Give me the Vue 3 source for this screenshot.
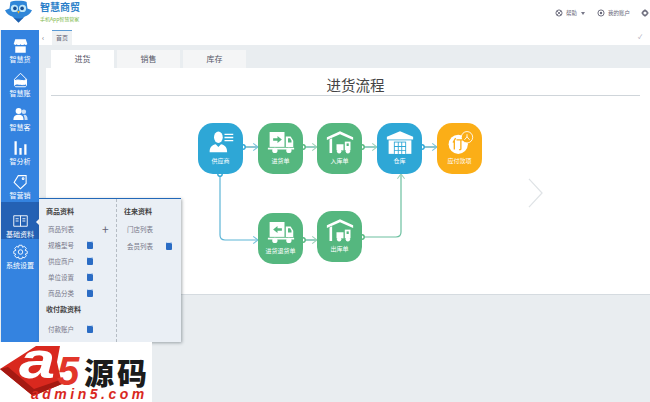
<script setup>
const menus = [
  { name: '智慧货', icon: 'shop' },
  { name: '智慧账', icon: 'wallet' },
  { name: '智慧客', icon: 'users' },
  { name: '智分析', icon: 'bars' },
  { name: '智营销', icon: 'tag' },
  { name: '基础资料', icon: 'book', active: true },
  { name: '系统设置', icon: 'gear' }
]

const tabs = [
  { name: '进货', active: true },
  { name: '销售' },
  { name: '库存' }
]

// 流程节点，坐标相对流程图
const nodes = [
  { name: '供应商', x: 152, y: 55, color: 'blue', icon: 'person' },
  { name: '进货单', x: 212, y: 55, color: 'green', icon: 'truckIn' },
  { name: '入库单', x: 271, y: 55, color: 'green', icon: 'store' },
  { name: '仓库', x: 331, y: 55, color: 'blue', icon: 'house' },
  { name: '应付款项', x: 391, y: 55, color: 'orange', icon: 'pay' },
  { name: '进货退货单', x: 212, y: 145, color: 'green', icon: 'truckOut' },
  { name: '出库单', x: 271, y: 143, color: 'green', icon: 'store' }
]

const leftGroups = [
  {
    title: '商品资料',
    rows: [
      { name: '商品列表', plus: true },
      { name: '规格型号', doc: true },
      { name: '供应商户', doc: true },
      { name: '单位设置', doc: true },
      { name: '商品分类', doc: true }
    ]
  },
  {
    title: '收付款资料',
    rows: [{ name: '付款账户', doc: true }]
  }
]

const rightGroup = {
  title: '往来资料',
  rows: [
    { name: '门店列表' },
    { name: '会员列表', doc: true }
  ]
}
</script>

<template>
  <div class="page">
    <header class="top">
      <div class="brand">
        <svg class="owl" viewBox="0 0 30 26">
          <path d="M6 2C8 0 22 0 24 2L25 9L30 11C28 15 25 17 22 18L18 21L15 24L12 21L8 18C5 17 2 15 0 11L5 9Z" fill="#2f86d8" />
          <path d="M8 18C11 21 19 21 22 18L18 22L15 25L12 22Z" fill="#1c5fae" />
          <circle cx="10.5" cy="9" r="4" fill="#bfe6f8" />
          <circle cx="19.5" cy="9" r="4" fill="#bfe6f8" />
          <circle cx="11" cy="9" r="2" fill="#174f92" />
          <circle cx="19" cy="9" r="2" fill="#174f92" />
          <path d="M13.5 12L16.5 12L15 15Z" fill="#f4b32a" />
        </svg>
        <div class="brand-text">
          <div class="brand-name">智慧商贸</div>
          <div class="brand-sub">手机App智慧管家</div>
        </div>
      </div>
      <div class="tools">
        <svg class="tool-icon" viewBox="0 0 12 12">
          <circle cx="6" cy="6" r="4.6" fill="none" stroke="#667" stroke-width="1.4" />
          <path d="M3 3L9 9M9 3L3 9" stroke="#667" stroke-width="1.2" />
        </svg>
        <span class="tool-text">帮助</span>
        <span class="caret"></span>
        <svg class="tool-icon second" viewBox="0 0 12 12">
          <circle cx="6" cy="6" r="4.6" fill="none" stroke="#667" stroke-width="1.4" />
          <circle cx="6" cy="6" r="1.8" fill="#667" />
        </svg>
        <span class="tool-text">我的账户</span>
        <svg class="tool-icon gear" viewBox="0 0 12 12">
          <circle cx="6" cy="6" r="3.4" fill="none" stroke="#667" stroke-width="2" />
          <path d="M6 0.5V2.5M6 9.5V11.5M0.5 6H2.5M9.5 6H11.5" stroke="#667" stroke-width="1.6" />
        </svg>
      </div>
    </header>

    <div class="body">
      <aside class="side">
        <div v-for="m in menus" :key="m.name" class="menu" :class="{ active: m.active }">
          <svg class="menu-icon" viewBox="0 0 20 20">
            <g v-if="m.icon === 'shop'" fill="#fff">
              <path d="M3 1H17L19 7C19 9 16 9 15 7.500C14 9 11 9 10 7.500C9 9 6 9 5 7.500C4 9 1 9 1 7Z" />
              <path d="M3 10.500H17V19H3Z" />
            </g>
            <g v-else-if="m.icon === 'wallet'" fill="none" stroke="#fff" stroke-width="1.300">
              <path d="M10 1L18 9V17C18 18 17 19 16 19H4C3 19 2 18 2 17V9Z" />
              <path d="M2.500 11C7 8 13 13 17.500 9.500V15C13 18 7 14 2.500 16Z" fill="#fff" />
            </g>
            <g v-else-if="m.icon === 'users'" fill="#fff">
              <circle cx="7.500" cy="6" r="4" />
              <path d="M0.500 18C0.500 12 4 11 7.500 11C11 11 14 12 14 18Z" />
              <circle cx="14.500" cy="7" r="3" opacity=".75" />
              <path d="M15 11C18 11 19.500 13 19.500 18H15.500C15.500 15 15 13 14 12Z" opacity=".75" />
            </g>
            <g v-else-if="m.icon === 'bars'" fill="#fff">
              <path d="M2 1H5V19H2ZM8.500 10H11.500V19H8.500ZM15 5H18V19H15Z" />
            </g>
            <g v-else-if="m.icon === 'tag'" fill="none" stroke="#fff" stroke-width="1.400">
              <path d="M7 1.500H17.500V12L10 19L1.500 10.500Z" />
              <circle cx="13.500" cy="5.500" r="1.200" />
            </g>
            <g v-else-if="m.icon === 'book'" fill="none" stroke="#fff" stroke-width="1.200">
              <path d="M1 3H19V17H1ZM10 3V17M3.500 7H7.500M3.500 10H7.500M12.500 7H16.500M12.500 10H16.500" />
            </g>
            <g v-else fill="none" stroke="#fff" stroke-width="1.200">
              <path d="M8 1H12L12.700 3.700L15.200 2.500L17.800 5.500L16 7.500L19 9V12L16.300 12.800L17.800 15L15 18L12.700 16.500L12 19H8L7.300 16.500L5 18L2.200 15L3.700 12.800L1 12V9L4 7.500L2.200 5.500L4.800 2.500L7.300 3.700Z" />
              <circle cx="10" cy="10" r="3" />
            </g>
          </svg>
          <span class="menu-name">{{ m.name }}</span>
        </div>
      </aside>

      <main class="main">
        <div class="crumb">
          <span class="crumb-arrow">‹</span>
          <span class="crumb-tab">首页</span>
          <span class="crumb-check">✓</span>
        </div>
        <div class="content">
          <div class="tabs">
            <span v-for="t in tabs" :key="t.name" class="tab" :class="{ active: t.active }">{{ t.name }}</span>
          </div>
          <section class="panel">
            <h2 class="title">进货流程</h2>
            <div class="flow">
              <svg class="lines" viewBox="0 0 480 210">
                <defs>
                  <marker id="arrow-blue" markerWidth="6" markerHeight="8" refX="5" refY="4" orient="auto">
                    <path d="M1 1L5 4L1 7" fill="none" stroke="#7cc4dc" stroke-width="0.900" />
                  </marker>
                  <marker id="arrow-green" markerWidth="6" markerHeight="8" refX="5" refY="4" orient="auto">
                    <path d="M1 1L5 4L1 7" fill="none" stroke="#9ed2b8" stroke-width="0.900" />
                  </marker>
                </defs>
                <g fill="none" stroke-width="1.200">
                  <path d="M197 79H212" stroke="#3f9fb4" marker-end="url(#arrow-blue)" />
                  <path d="M257 79H271" stroke="#4fae9a" marker-end="url(#arrow-green)" />
                  <path d="M316 79H331" stroke="#4fae9a" marker-end="url(#arrow-green)" />
                  <path d="M376 79H391" stroke="#3f9fb4" marker-end="url(#arrow-blue)" />
                  <path d="M174 106V167C174 170 176 172 179 172H212" stroke="#5db5d6" marker-end="url(#arrow-blue)" />
                  <path d="M257 172H271" stroke="#4fae9a" marker-end="url(#arrow-green)" />
                  <path d="M316 169H350C353 169 355 167 355 164V106" stroke="#6cc0a0" marker-end="url(#arrow-green)" />
                </g>
                <g fill="#fff" stroke-width="1.400">
                  <circle cx="197" cy="79" r="2.200" stroke="#2ea7d6" />
                  <circle cx="257" cy="79" r="2.200" stroke="#55b77f" />
                  <circle cx="316" cy="79" r="2.200" stroke="#55b77f" />
                  <circle cx="376" cy="79" r="2.200" stroke="#2ea7d6" />
                  <circle cx="174" cy="106" r="2.200" stroke="#2ea7d6" />
                  <circle cx="257" cy="172" r="2.200" stroke="#55b77f" />
                  <circle cx="316" cy="169" r="2.200" stroke="#55b77f" />
                </g>
              </svg>
              <div
                v-for="n in nodes"
                :key="n.name"
                class="node"
                :class="n.color"
                :style="{ left: n.x + 'px', top: n.y + 'px' }"
              >
                <svg class="node-icon" viewBox="0 0 32 26">
                  <g v-if="n.icon === 'person'" fill="#fff">
                    <ellipse cx="13" cy="7" rx="5" ry="6.500" />
                    <path d="M3 24C3 18 6 16 10 15L13 18L16 15C20 16 23 18 23 24Z" />
                    <path d="M20 3H30V4.500H20ZM20 6.500H30V8H20ZM20 10H30V11.500H20Z" />
                  </g>
                  <g v-else-if="n.icon === 'truckIn' || n.icon === 'truckOut'" fill="#fff">
                    <path d="M3 1H20V18H3Z" />
                    <path d="M21.500 6H27L30 11V18H21.500Z" />
                    <path d="M1 19H31V21H1Z" />
                    <circle cx="9" cy="22" r="3" />
                    <circle cx="25" cy="22" r="3" />
                    <path v-if="n.icon === 'truckIn'" d="M7 8H12V5.500L17 9.500L12 13.500V11H7Z" fill="#55b77f" />
                    <path v-else d="M17 8H12V5.500L7 9.500L12 13.500V11H17Z" fill="#55b77f" />
                    <path d="M24 8H26.500L28 11V13H24Z" fill="#55b77f" />
                  </g>
                  <g v-else-if="n.icon === 'store'" fill="#fff">
                    <path d="M16 0L31 7V10L16 3.500L1 10V7Z" />
                    <path d="M4 9.500L7 8V25H4Z" />
                    <path d="M12 15H20V22H12Z" />
                    <path d="M21.500 12H28V22H21.500Z" />
                    <circle cx="15" cy="23" r="2.500" />
                    <circle cx="25" cy="23" r="2.500" />
                    <path d="M23.500 14H26V17H23.500Z" fill="#55b77f" />
                  </g>
                  <g v-else-if="n.icon === 'house'" fill="#fff">
                    <path d="M16 0L31 6.500V9.500H1V6.500Z" />
                    <path d="M3 10.500H29V26H3Z" />
                    <path d="M9 12H23V26H9Z" fill="#2ea7d6" />
                    <path d="M10 13H13.500V17H10ZM14.500 13H17.500V17H14.500ZM18.500 13H22V17H18.500ZM10 18H13.500V21.500H10ZM14.500 18H17.500V21.500H14.500ZM18.500 18H22V21.500H18.500ZM10 22.500H13.500V26H10ZM14.500 22.500H17.500V26H14.500ZM18.500 22.500H22V26H18.500Z" />
                  </g>
                  <g v-else>
                    <circle cx="14" cy="15" r="11" fill="#fff" />
                    <circle cx="24" cy="7" r="6.500" fill="#fbae17" stroke="#fff" stroke-width="1" />
                    <path d="M24 3.500V7M21 10L24 6.500L27 10" fill="none" stroke="#fff" stroke-width="1" />
                    <path d="M11 8L8 13M9.500 11V21M12 10H20M17 10V20C17 21 16 21.500 15 21" fill="none" stroke="#fbae17" stroke-width="1.500" />
                  </g>
                </svg>
                <span class="node-name">{{ n.name }}</span>
              </div>
            </div>
            <svg class="next" viewBox="0 0 16 32">
              <path d="M1 1L15 16L1 31" fill="none" stroke="#dfe3e6" stroke-width="1.300" />
            </svg>
          </section>
        </div>
      </main>
    </div>

    <div class="popup">
      <div class="col left">
        <template v-for="g in leftGroups" :key="g.title">
          <div class="pop-title">{{ g.title }}</div>
          <div v-for="r in g.rows" :key="r.name" class="pop-row">
            <span class="pop-name">{{ r.name }}</span>
            <span v-if="r.plus" class="plus">+</span>
            <span v-if="r.doc" class="doc"></span>
          </div>
        </template>
      </div>
      <div class="col right">
        <div class="pop-title">{{ rightGroup.title }}</div>
        <div v-for="r in rightGroup.rows" :key="r.name" class="pop-row">
          <span class="pop-name">{{ r.name }}</span>
          <span v-if="r.doc" class="doc"></span>
        </div>
      </div>
    </div>

    <div class="a5">
      <svg class="a5-mark" viewBox="0 0 90 56">
        <path d="M0 27L36 4H60L57 20L62 42L33 54Z" fill="#d9281e" />
        <path d="M0 27L33 54L62 42L60 38L34 47L8 25Z" fill="#a51912" />
      </svg>
      <span class="a5-a">a</span>
      <span class="a5-five">5</span>
      <span class="a5-cn">源码</span>
      <span class="a5-url">admin5.com</span>
    </div>
  </div>
</template>

<style scoped>
.page {
  position: relative;
  width: 650px;
  height: 402px;
  overflow: hidden;
  display: flex;
  flex-direction: column;
  background: #e9edf0;
  font-family: "Noto Sans CJK SC", "Liberation Sans", sans-serif;
}

.top {
  height: 30px;
  flex-shrink: 0;
  display: flex;
  justify-content: space-between;
  background: #fff;
}
.brand {
  display: flex;
  padding-left: 5px;
}
.owl {
  width: 27px;
  height: 24px;
}
.brand-text {
  margin-left: 8px;
}
.brand-name {
  font-size: 10px;
  line-height: 14px;
  font-weight: 700;
  color: #2c7fc9;
}
.brand-sub {
  margin-top: 1px;
  font-size: 5px;
  line-height: 7px;
  color: #7cb84a;
}
.tools {
  display: flex;
  align-items: center;
  height: 26px;
  padding-right: 1px;
  color: #667;
}
.tool-icon {
  width: 8px;
  height: 8px;
}
.tool-icon.second {
  margin-left: 12px;
}
.tool-icon.gear {
  margin-left: 11px;
}
.tool-text {
  margin-left: 3px;
  font-size: 5.500px;
}
.caret {
  margin-left: 4px;
  border-left: 2px solid transparent;
  border-right: 2px solid transparent;
  border-top: 3px solid #778;
}

.body {
  display: flex;
  height: 372px;
}
.side {
  width: 38px;
  height: 312px;
  margin-left: 1px;
  padding-top: 3px;
  box-sizing: border-box;
  flex-shrink: 0;
  background: #3483e0;
}
.menu {
  position: relative;
  height: 34px;
  display: flex;
  flex-direction: column;
  align-items: center;
  justify-content: flex-end;
  padding-bottom: 3px;
  box-sizing: border-box;
  color: #fff;
}
.menu.active {
  height: 37px;
  margin-top: -1px;
  padding-bottom: 0;
  background: #2461b4;
}
.menu.active::after {
  content: "";
  position: absolute;
  right: 0;
  top: 17px;
  border-top: 3px solid transparent;
  border-bottom: 3px solid transparent;
  border-right: 3px solid #fff;
}
.menu-icon {
  width: 15px;
  height: 16px;
}
.menu-name {
  margin-top: 1px;
  font-size: 7px;
  line-height: 9px;
  white-space: nowrap;
}

.main {
  flex: 1;
  min-width: 0;
}
.crumb {
  position: relative;
  height: 15px;
  display: flex;
  background: #fff;
}
.crumb-arrow {
  width: 13px;
  padding-left: 3px;
  box-sizing: border-box;
  font-size: 7px;
  line-height: 14px;
  color: #667;
}
.crumb-tab {
  width: 20px;
  border-top: 1px solid #5b9bd5;
  background: #eef1f3;
  font-size: 6px;
  line-height: 14px;
  text-align: center;
  color: #667;
}
.crumb-check {
  position: absolute;
  right: 8px;
  top: 2px;
  font-size: 6px;
  color: #99a;
}
.content {
  padding: 5px 0 0 7px;
}
.tabs {
  display: flex;
  gap: 3px;
  padding-left: 5px;
}
.tab {
  width: 63px;
  height: 18px;
  background: #f4f5f6;
  font-size: 8px;
  line-height: 18px;
  text-align: center;
  color: #556;
}
.tab.active {
  background: #fff;
}
.panel {
  position: relative;
  height: 226px;
  background: #fff;
  border-bottom: 1px solid #d5dbe0;
}
.title {
  margin: 0 10px 0 5px;
  padding-left: 20px;
  height: 28px;
  border-bottom: 1px solid #cfd5da;
  box-sizing: border-box;
  font-size: 14.500px;
  font-weight: 400;
  line-height: 33px;
  text-align: center;
  color: #444;
}
.flow {
  position: absolute;
  left: 0;
  top: 0;
  width: 480px;
  height: 210px;
}
.lines {
  position: absolute;
  inset: 0;
  width: 480px;
  height: 210px;
}
.node {
  position: absolute;
  width: 45px;
  height: 51px;
  border-radius: 15px;
  display: flex;
  flex-direction: column;
  align-items: center;
  padding-top: 8px;
  box-sizing: border-box;
  color: #fff;
}
.node.blue {
  background: #2ea7d6;
}
.node.green {
  background: #55b77f;
}
.node.orange {
  background: #fbae17;
}
.node-icon {
  width: 28px;
  height: 23px;
}
.node-name {
  margin-top: 2px;
  font-size: 6px;
  line-height: 9px;
  white-space: nowrap;
}
.next {
  position: absolute;
  left: 482px;
  top: 110px;
  width: 15px;
  height: 30px;
}

.popup {
  position: absolute;
  left: 39px;
  top: 198px;
  width: 142px;
  height: 144px;
  display: flex;
  box-sizing: border-box;
  border-top: 1px solid #2268b8;
  background: #eaeff5;
  box-shadow: 1px 1px 3px rgba(60, 70, 80, 0.45);
}
.col {
  padding-top: 4px;
  box-sizing: border-box;
}
.col.left {
  width: 78px;
  padding-left: 7px;
  border-right: 1px dashed #b5bcc4;
}
.col.right {
  flex: 1;
  padding-left: 7px;
}
.pop-title {
  height: 16px;
  font-size: 7px;
  line-height: 16px;
  font-weight: 700;
  color: #444;
}
.pop-row {
  position: relative;
  height: 16px;
  padding-left: 2px;
  font-size: 6.500px;
  line-height: 16px;
  color: #778;
}
.col.left .pop-title + .pop-row {
  margin-top: 2px;
}
.col.left .pop-row:last-child {
  margin-top: 4px;
}
.col.right .pop-row {
  padding-left: 3px;
  margin-bottom: 0.500px;
}
.col.right .pop-title {
  margin-bottom: 2px;
}
.plus {
  position: absolute;
  left: 56px;
  top: 0;
  font-size: 12px;
  line-height: 15px;
  color: #667;
}
.doc {
  position: absolute;
  left: 41px;
  top: 4px;
  width: 6px;
  height: 8px;
  background: #2b6cc4;
  border-radius: 1px 2px 1px 1px;
  box-shadow: inset 0 2px 0 -1px #cfe0f5;
}
.col.right .doc {
  left: 42px;
}

.a5 {
  position: absolute;
  left: 0;
  top: 342px;
  width: 152px;
  height: 60px;
  background: #fff;
}
.a5-mark {
  position: absolute;
  left: 0;
  top: 0;
  width: 90px;
  height: 56px;
}
.a5-a,
.a5-five {
  position: absolute;
  font-family: "Liberation Sans", sans-serif;
  font-weight: 700;
  font-style: italic;
}
.a5-a {
  left: 19px;
  top: 0;
  font-size: 52px;
  line-height: 36px;
  color: #fff;
  transform: scaleX(1.25);
  transform-origin: left center;
}
.a5-five {
  left: 57px;
  top: 14px;
  font-size: 40px;
  line-height: 30px;
  color: #e2362a;
}
.a5-cn {
  position: absolute;
  left: 84px;
  top: 14px;
  font-size: 30px;
  line-height: 30px;
  font-weight: 900;
  letter-spacing: 3px;
  color: #1b1b1b;
}
.a5-url {
  position: absolute;
  left: 31px;
  top: 45px;
  font-family: "Liberation Sans", sans-serif;
  font-size: 14px;
  line-height: 14px;
  font-weight: 700;
  font-style: italic;
  letter-spacing: 3.500px;
  color: #d9281e;
}
</style>
